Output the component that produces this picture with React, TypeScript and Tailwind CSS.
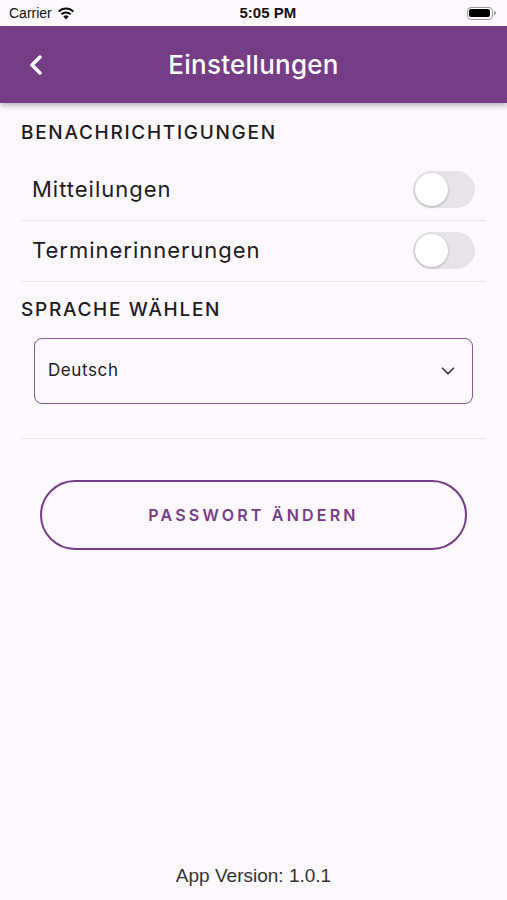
import { ChevronLeft, ChevronDown } from "lucide-react";

const font = { fontFamily: "Inter, 'Noto Sans', sans-serif" };

function Toggle() {
  return (
    <div className="flex h-[37px] w-[62px] items-center rounded-full bg-[#e6e4e8] p-[2px]">
      <div className="h-[33px] w-[33px] rounded-full bg-white shadow-[0_1px_3px_rgba(0,0,0,0.25)]" />
    </div>
  );
}

function Row({ label }: { label: string }) {
  return (
    <div className="flex h-[61px] items-center justify-between border-b border-[#e7e3e8] pl-[11px] pr-[11px]">
      <span className="text-[22px] tracking-[0.045em] text-[#1d1b1e]">{label}</span>
      <Toggle />
    </div>
  );
}

export default function App() {
  return (
    <div className="flex h-[900px] w-[507px] flex-col bg-[#fdf8fd]" style={font}>
      <div
        className="flex h-[26px] items-center justify-between px-[9px] text-[#111]"
        style={{ fontFamily: "'Liberation Sans', sans-serif" }}
      >
        <div className="flex items-center gap-[5px] text-[14px]">
          Carrier
          <svg width="18" height="13" viewBox="0 0 18 13">
            <path d="M9 12.5 L6.3 9.4 A4 4 0 0 1 11.7 9.4 Z" fill="#111" />
            <path d="M4.3 7.3 A6.8 6.8 0 0 1 13.7 7.3" stroke="#111" strokeWidth="2" fill="none" />
            <path d="M1.6 4.6 A10.5 10.5 0 0 1 16.4 4.6" stroke="#111" strokeWidth="2" fill="none" />
          </svg>
        </div>
        <div className="pr-[6px] text-[15px] font-bold">5:05 PM</div>
        <div className="flex items-center pr-[2px]">
          <div className="flex h-[13px] w-[26px] items-center rounded-[4px] border border-[#999] p-[1.5px]">
            <div className="h-full w-full rounded-[2px] bg-black" />
          </div>
          <div className="ml-[1px] h-[4px] w-[2px] rounded-r bg-[#999]" />
        </div>
      </div>

      <div className="relative z-10 flex h-[77px] items-center bg-[#763d87] px-[20px] shadow-[0_3px_5px_rgba(0,0,0,0.25)]">
        <ChevronLeft className="text-white" size={32} strokeWidth={2.6} />
        <div className="flex-1 pr-[32px] text-center text-[26px] font-medium tracking-[0.01em] text-white">
          Einstellungen
        </div>
      </div>

      <div className="flex flex-1 flex-col px-[21px] pt-[16px]">
        <div className="text-[19px] font-medium tracking-[0.09em] text-[#1d1b1e]">
          BENACHRICHTIGUNGEN
        </div>
        <div className="mt-[12px]">
          <Row label="Mitteilungen" />
          <Row label="Terminerinnerungen" />
        </div>
        <div className="mt-[14px] text-[19px] font-medium tracking-[0.09em] text-[#1d1b1e]">
          SPRACHE WÄHLEN
        </div>
        <div className="mt-[14px] px-[13px]">
          <div className="flex h-[66px] items-center justify-between rounded-[8px] border border-[#8a5a98] px-[13px]">
            <span className="text-[17px] tracking-[0.035em] text-[#1d1b1e]">Deutsch</span>
            <ChevronDown className="text-[#333]" size={22} strokeWidth={1.8} />
          </div>
        </div>
        <div className="mt-[34px] border-b border-[#e7e3e8]" />
        <div className="mt-[41px] px-[19px]">
          <button className="flex h-[70px] w-full items-center justify-center rounded-full border-2 border-[#763d87] text-[16px] font-semibold tracking-[0.2em] text-[#763d87]">
            PASSWORT ÄNDERN
          </button>
        </div>
        <div className="flex-1" />
        <div className="pb-[10px] text-center text-[19px] text-[#333]" style={{ fontFamily: "'Liberation Sans', sans-serif" }}>
          App Version: 1.0.1
        </div>
      </div>
    </div>
  );
}
